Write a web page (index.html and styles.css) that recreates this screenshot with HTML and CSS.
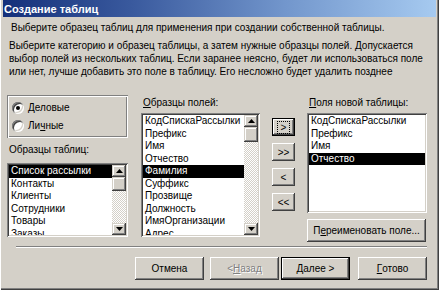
FILE: index.html
```html
<!DOCTYPE html>
<html lang="ru">
<head>
<meta charset="utf-8">
<title>Создание таблиц</title>
<link rel="stylesheet" href="styles.css">
</head>
<body>
<div class="window">
  <div class="titlebar"><span class="title">Создание таблиц</span></div>
  <div class="content">
    <p class="intro">Выберите образец таблиц для применения при создании собственной таблицы.</p>
    <p class="desc">Выберите категорию и образец таблицы, а затем нужные образцы полей. Допускается<br>выбор полей из нескольких таблиц. Если заранее неясно, будет ли использоваться поле<br>или нет, лучше добавить это поле в таблицу. Его несложно будет удалить позднее</p>
    <div class="main">
      <div class="col col-tables">
        <div class="group">
          <div class="opt"><span class="radio checked"></span><span><u>Д</u>еловые</span></div>
          <div class="opt"><span class="radio"></span><span>Ли<u>ч</u>ные</span></div>
        </div>
        <div class="label label-tables">Образцы таблиц:</div>
        <div class="listbox lb-tables">
          <div class="items">
            <div class="item sel">Список рассылки</div>
            <div class="item">Контакты</div>
            <div class="item">Клиенты</div>
            <div class="item">Сотрудники</div>
            <div class="item">Товары</div>
            <div class="item">Заказы</div>
          </div>
          <div class="scrollbar">
            <div class="sb-btn"><svg width="7" height="4" viewBox="0 0 7 4"><polygon points="3.5,0 7,4 0,4" fill="#000"/></svg></div>
            <div class="thumb"></div>
            <div class="track"></div>
            <div class="sb-btn"><svg width="7" height="4" viewBox="0 0 7 4"><polygon points="0,0 7,0 3.5,4" fill="#000"/></svg></div>
          </div>
        </div>
      </div>
      <div class="col col-fields">
        <div class="label"><u>О</u>бразцы полей:</div>
        <div class="listbox lb-fields">
          <div class="items">
            <div class="item">КодСпискаРассылки</div>
            <div class="item">Префикс</div>
            <div class="item">Имя</div>
            <div class="item">Отчество</div>
            <div class="item sel">Фамилия</div>
            <div class="item">Суффикс</div>
            <div class="item">Прозвище</div>
            <div class="item">Должность</div>
            <div class="item">ИмяОрганизации</div>
            <div class="item">Адрес</div>
          </div>
          <div class="scrollbar">
            <div class="sb-btn"><svg width="7" height="4" viewBox="0 0 7 4"><polygon points="3.5,0 7,4 0,4" fill="#000"/></svg></div>
            <div class="thumb thumb-fields"></div>
            <div class="track"></div>
            <div class="sb-btn"><svg width="7" height="4" viewBox="0 0 7 4"><polygon points="0,0 7,0 3.5,4" fill="#000"/></svg></div>
          </div>
        </div>
      </div>
      <div class="col col-move">
        <div class="btn small default"><span class="focus">&gt;</span></div>
        <div class="btn small">&gt;&gt;</div>
        <div class="btn small">&lt;</div>
        <div class="btn small">&lt;&lt;</div>
      </div>
      <div class="col col-new">
        <div class="label"><u>П</u>оля новой таблицы:</div>
        <div class="listbox lb-new">
          <div class="items">
            <div class="item">КодСпискаРассылки</div>
            <div class="item">Префикс</div>
            <div class="item">Имя</div>
            <div class="item sel">Отчество</div>
          </div>
        </div>
        <div class="btn rename">П<u>е</u>реименовать поле...</div>
      </div>
    </div>
    <div class="separator"></div>
    <div class="footer">
      <div class="btn wide">Отмена</div>
      <div class="btn wide disabled">&lt; <u>Н</u>азад</div>
      <div class="btn wide default"><span><u>Д</u>алее &gt;</span></div>
      <div class="btn wide ready"><u>Г</u>отово</div>
    </div>
  </div>
</div>
</body>
</html>
```
FILE: styles.css
```css
* { box-sizing: border-box; }
html, body { margin: 0; padding: 0; }
body {
  width: 439px;
  height: 290px;
  overflow: hidden;
  background: #d4d0c8;
  font-family: "Liberation Sans", Arial, sans-serif;
  font-size: 10px;
  color: #000;
}
.window {
  width: 439px;
  height: 290px;
  background: #d4d0c8;
  padding: 0 3px 3px 3px;
  display: flex;
  flex-direction: column;
  box-shadow: inset 1px 0 #fff, inset -1px -1px #404040, inset -2px -2px #808080;
}
.titlebar {
  height: 17px;
  flex: none;
  background: linear-gradient(to right, #14307a 0%, #3a5a9e 30%, #7296cc 65%, #a6caf0 100%);
  display: flex;
  align-items: center;
  padding-left: 1px;
}
.title {
  color: #fff;
  font-weight: bold;
  font-size: 11px;
}
.content {
  flex: 1;
  padding: 4px 9px 0 4px;
  display: flex;
  flex-direction: column;
}
p { margin: 0; white-space: nowrap; }
.intro {
  line-height: 13px;
  margin-left: 4px;
}
.desc {
  margin-top: 5px;
  margin-left: 2px;
  line-height: 13px;
}
.main {
  margin-top: 17px;
  height: 147px;
  display: flex;
  align-items: flex-start;
}
.col { display: flex; flex-direction: column; }
.col-tables { width: 121px; }
.col-fields { width: 119px; margin-left: 13px; }
.col-move { width: 23px; margin-left: 12px; padding-top: 23px; gap: 7px; }
.col-new { width: 120px; margin-left: 12px; }

.group {
  height: 43px;
  box-shadow: inset 1px 1px #808080, inset -1px -1px #fff, inset 2px 2px #fff, inset -2px -2px #808080;
  padding: 6px 0 0 5px;
  display: flex;
  flex-direction: column;
  gap: 5px;
}
.opt {
  display: flex;
  align-items: center;
  height: 13px;
  gap: 4px;
}
.radio {
  width: 12px;
  height: 12px;
  border-radius: 50%;
  background: #fff;
  position: relative;
  box-shadow: inset 1px 1px #808080, inset -1px -1px #fff, inset 2px 2px #404040, inset -2px -2px #d4d0c8;
}
.radio.checked::after {
  content: "";
  position: absolute;
  left: 4px;
  top: 4px;
  width: 4px;
  height: 4px;
  border-radius: 50%;
  background: #000;
}
.label {
  line-height: 13px;
  margin: 1px 0 4px 2px;
  white-space: nowrap;
}
.label-tables { margin: 5px 0 7px 2px; }

.listbox {
  background: #fff;
  padding: 2px;
  box-shadow: inset 1px 1px #808080, inset -1px -1px #fff, inset 2px 2px #404040, inset -2px -2px #d4d0c8;
  display: flex;
  overflow: hidden;
}
.lb-tables { height: 74px; }
.lb-fields { height: 124px; }
.lb-new { height: 100px; }
.items { flex: 1; overflow: hidden; }
.item {
  height: 12.5px;
  line-height: 12.5px;
  padding-left: 2px;
  white-space: nowrap;
}
.item.sel { background: #000; color: #fff; }

.scrollbar {
  width: 14px;
  flex: none;
  display: flex;
  flex-direction: column;
}
.sb-btn, .thumb {
  background: #d4d0c8;
  box-shadow: inset -1px -1px #404040, inset 1px 1px #d4d0c8, inset -2px -2px #808080, inset 2px 2px #fff;
  display: flex;
  align-items: center;
  justify-content: center;
}
.sb-btn { height: 12px; flex: none; }
.thumb { height: 14px; flex: none; }
.thumb-fields { height: 15px; }
.track {
  flex: 1;
  background: repeating-conic-gradient(#d4d0c8 0 25%, #fff 0 50%) 0 0 / 2px 2px;
}

.btn {
  background: #d4d0c8;
  box-shadow: inset -1px -1px #404040, inset 1px 1px #fff, inset -2px -2px #808080, inset 2px 2px #d4d0c8;
  display: flex;
  align-items: center;
  justify-content: center;
  white-space: nowrap;
  line-height: 13px;
}
.btn.default {
  box-shadow: inset 0 0 0 1px #000, inset -2px -2px #404040, inset 2px 2px #fff, inset -3px -3px #808080;
}
.btn.small { width: 23px; height: 18px; }
.focus {
  outline: 1px dotted #000;
  outline-offset: 0;
  padding: 0 3px;
  line-height: 11px;
}
.rename { margin-top: 6px; height: 23px; width: 119px; }
.separator {
  margin-top: 4px;
  margin-left: 9px;
  height: 2px;
  flex: none;
  box-shadow: inset 0 1px #808080, inset 0 -1px #fff;
}
.footer {
  margin-top: 9px;
  display: flex;
  justify-content: flex-end;
  gap: 6px;
}
.btn.wide { width: 69px; height: 23px; }
.btn.disabled { color: #808080; text-shadow: 1px 1px #fff; margin-right: -4px; }
.btn.ready { margin-left: 2px; }
```
